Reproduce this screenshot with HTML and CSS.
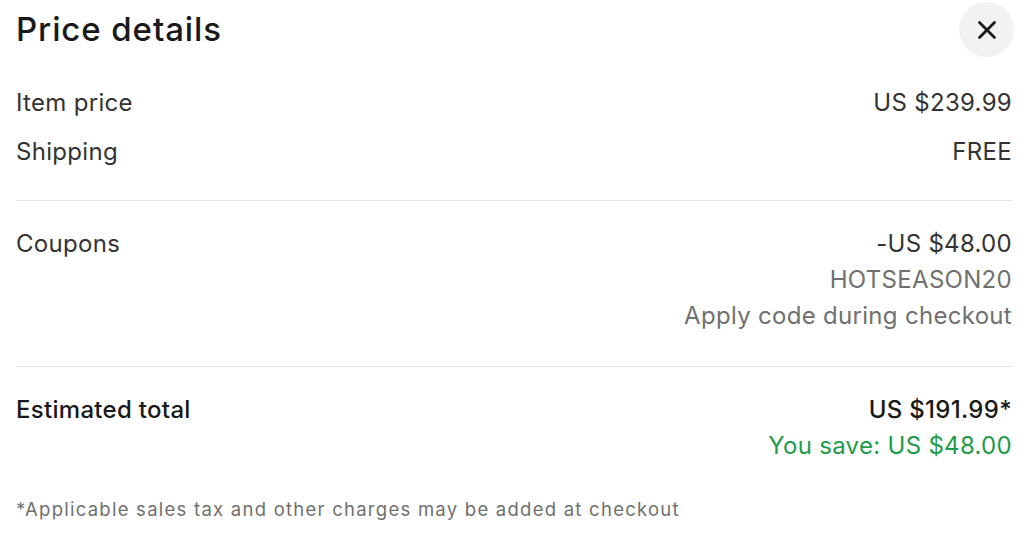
FILE: index.html
```html
<!DOCTYPE html>
<html>
<head>
<meta charset="utf-8">
<link rel="stylesheet" href="styles.css">
</head>
<body>
<div class="panel">
  <div class="header">
    <h1 class="title">Price details</h1>
    <button class="close" aria-label="Close">
      <svg width="22" height="22" viewBox="0 0 22 22"><path d="M3.5 3.5 L18.5 18.5 M18.5 3.5 L3.5 18.5" stroke="#191919" stroke-width="2.8" stroke-linecap="round"/></svg>
    </button>
  </div>
  <div class="section first">
    <div class="row"><span class="label">Item price</span><span class="value">US $239.99</span></div>
    <div class="row"><span class="label">Shipping</span><span class="value">FREE</span></div>
  </div>
  <div class="section">
    <div class="row top">
      <span class="label">Coupons</span>
      <div class="stack">
        <span class="value">-US $48.00</span>
        <span class="muted">HOTSEASON20</span>
        <span class="muted">Apply code during checkout</span>
      </div>
    </div>
  </div>
  <div class="section last">
    <div class="row top">
      <span class="label strong">Estimated total</span>
      <div class="stack">
        <span class="value strong">US $191.99*</span>
        <span class="save">You save: US $48.00</span>
      </div>
    </div>
  </div>
  <p class="note">*Applicable sales tax and other charges may be added at checkout</p>
</div>
</body>
</html>
```
FILE: styles.css
```css
* { box-sizing: border-box; }
html, body { margin: 0; padding: 0; background: #fff; }
body { font-family: Inter, "Liberation Sans", sans-serif; color: #191919; }
.panel { padding: 0 12px 0 16px; }
.header { display: flex; justify-content: space-between; align-items: center; height: 58px; }
.title { margin: 0; font-size: 33px; font-weight: 500; letter-spacing: 0.9px; color: #191919; }
.close { width: 55px; height: 55px; border-radius: 50%; border: 0; background: #f2f2f2; display: flex; align-items: center; justify-content: center; margin-right: -2px; margin-top: 1px; padding: 0; }
.section { border-top: 1px solid #e5e5e5; padding: 25px 0 32px; }
.section.first { border-top: 0; padding: 20px 0 24px; }
.section.last { padding: 25px 0 33px; }
.row { display: flex; justify-content: space-between; align-items: center; font-size: 24px; letter-spacing: 0.3px; line-height: 49px; }
.row.top { align-items: flex-start; line-height: 36px; }
.label { color: #333; }
.value { color: #333; }
.strong { font-weight: 500; color: #191919; }
.stack { display: flex; flex-direction: column; align-items: flex-end; }
.muted { color: #707070; }
.save { color: #1e9b4c; }
.note { margin: 0; font-size: 18.5px; letter-spacing: 1.25px; line-height: 24px; color: #707070; }
```
